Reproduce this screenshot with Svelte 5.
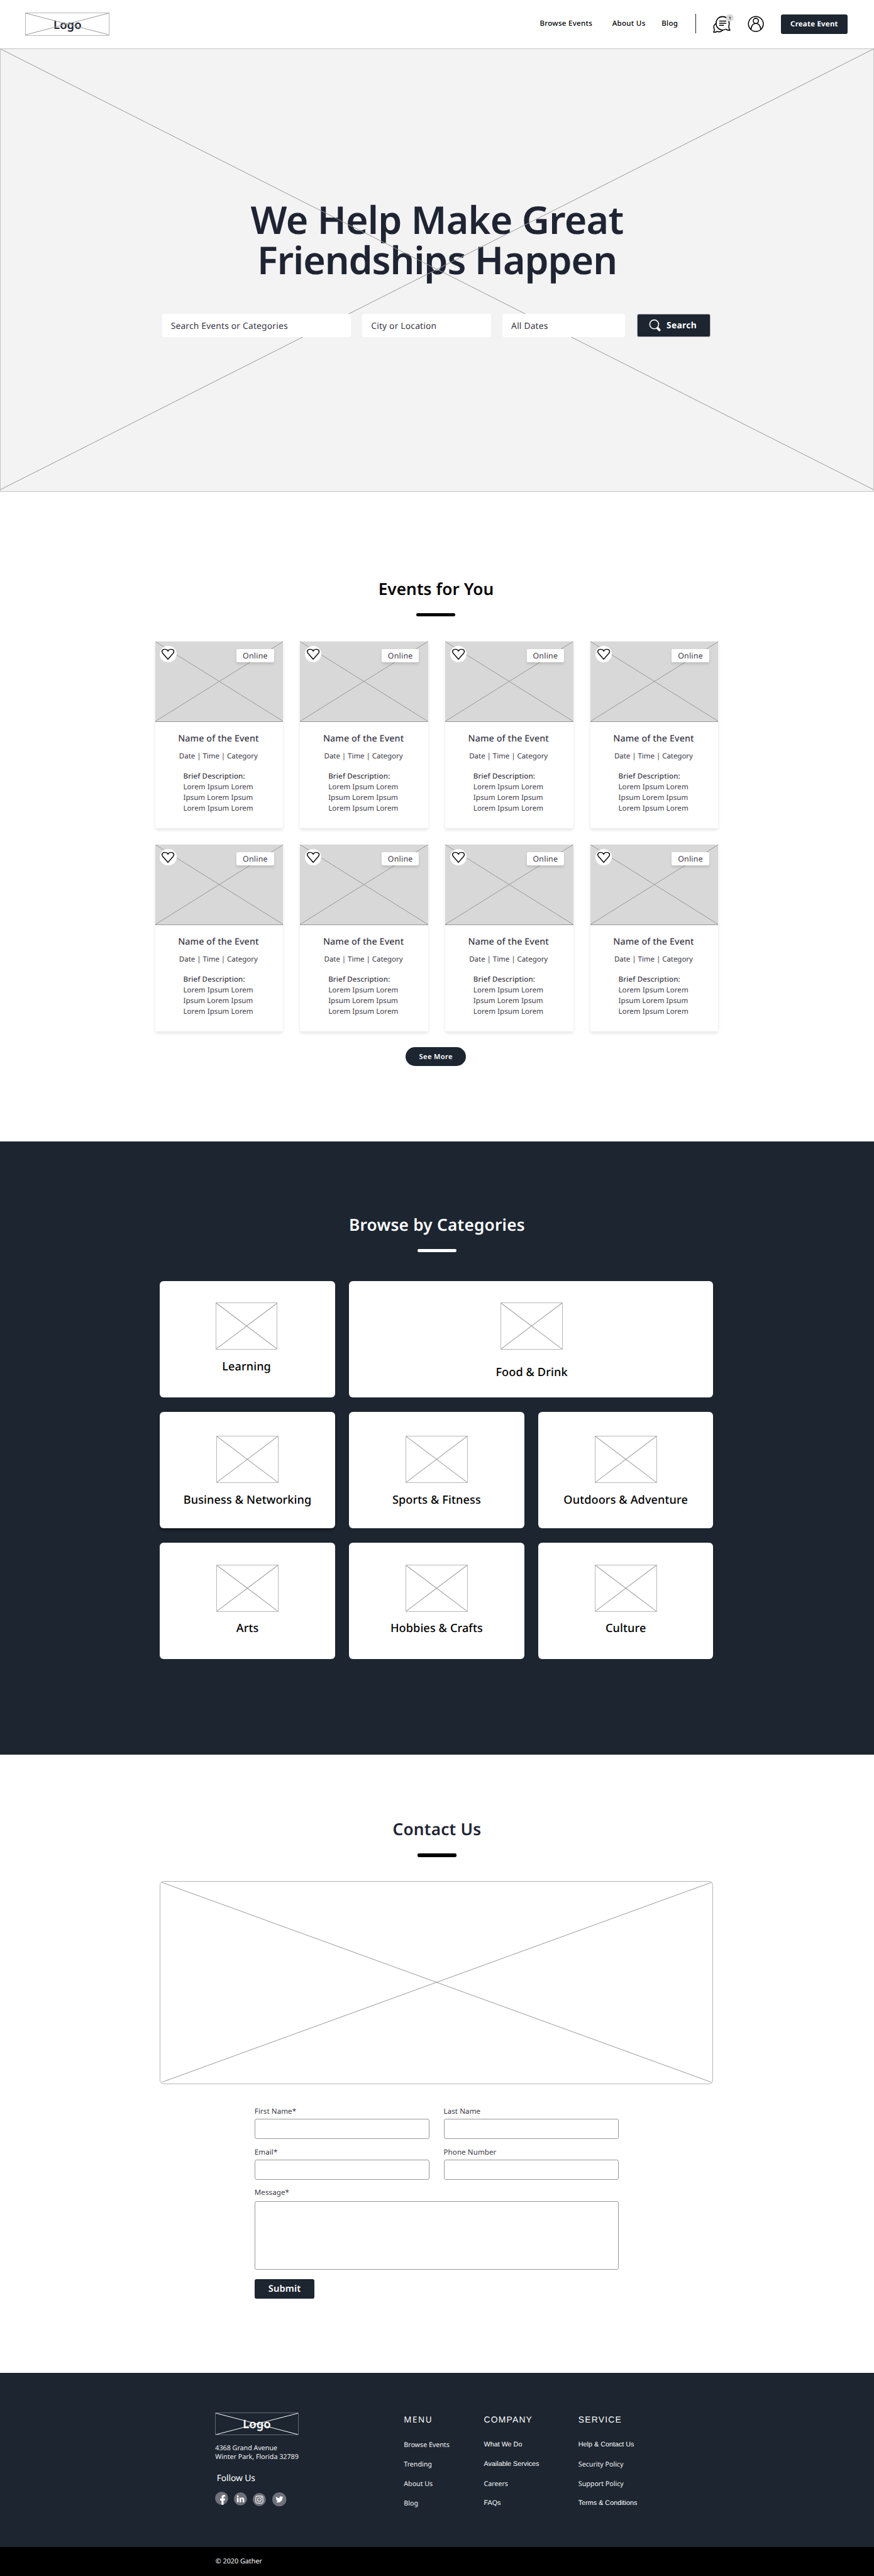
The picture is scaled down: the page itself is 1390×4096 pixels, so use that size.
<script>
  const events = Array.from({ length: 8 }, (_, id) => ({ id }));

  const categories = [
    { name: 'Learning', kind: 'learning' },
    { name: 'Food & Drink', kind: 'wide' },
    { name: 'Business & Networking', kind: 'mid raised' },
    { name: 'Sports & Fitness', kind: 'mid' },
    { name: 'Outdoors & Adventure', kind: 'mid' },
    { name: 'Arts', kind: 'last' },
    { name: 'Hobbies & Crafts', kind: 'last' },
    { name: 'Culture', kind: 'last' }
  ];

  const columns = [
    {
      title: 'MENU',
      kind: 'menu',
      links: [{ t: 'Browse Events' }, { t: 'Trending' }, { t: 'About Us' }, { t: 'Blog' }]
    },
    {
      title: 'COMPANY',
      kind: 'company',
      links: [
        { t: 'What We Do', alt: true },
        { t: 'Available Services', alt: true },
        { t: 'Careers' },
        { t: 'FAQs', alt: true }
      ]
    },
    {
      title: 'SERVICE',
      kind: 'service',
      links: [
        { t: 'Help & Contact Us', alt: true },
        { t: 'Security Policy' },
        { t: 'Support Policy' },
        { t: 'Terms & Conditions', alt: true }
      ]
    }
  ];
</script>

{#snippet cross()}
  <svg class="cross" viewBox="0 0 100 100" preserveAspectRatio="none" aria-hidden="true">
    <path d="M0 0L100 100M100 0L0 100" vector-effect="non-scaling-stroke" />
  </svg>
{/snippet}

<div class="page">
  <header class="topbar">
    <a class="logo" href="#top">{@render cross()}<span>Logo</span></a>
    <nav class="nav">
      <a class="n1" href="#events">Browse Events</a>
      <a class="n2" href="#about">About Us</a>
      <a class="n3" href="#blog">Blog</a>
    </nav>
    <div class="rule"></div>
    <svg class="chat" viewBox="118 24 134 120" aria-label="Messages">
      <g fill="none" stroke="#000" stroke-width="6" stroke-linecap="round" stroke-linejoin="round">
        <path d="M201 119C170 134 141 112 141 82C141 58 159 41 181 41C204 41 222 60 222 84C222 91 220 96 219 102C219 112 222 119 227 125C217 127 208 124 201 119Z" />
        <path d="M138 85C126 95 123 106 130 119C132 126 128 132 125 137C135 139 143 136 149 133C161 138 173 134 181 126" />
        <path d="M162 69H202M162 82H202M162 95H187" />
      </g>
      <circle cx="226" cy="49" r="23" fill="#d8d8d8" />
      <text x="226" y="58" text-anchor="middle" font-size="24" font-weight="600">1</text>
    </svg>
    <svg class="user" viewBox="336 36 102 102" aria-label="Account">
      <g fill="none" stroke="#000" stroke-width="6">
        <circle cx="387" cy="87" r="46" />
        <circle cx="387" cy="68" r="16" />
        <path d="M357 122C357 98 370 84 387 84C404 84 417 98 417 122" />
      </g>
    </svg>
    <button class="create">Create Event</button>
  </header>

  <section class="hero">
    <div class="hero-lines">{@render cross()}</div>
    <h1>
      <span class="first">We Help Make Great</span>
      <span class="second">Friendships Happen</span>
    </h1>
    <div class="search">
      <div class="field what">Search Events or Categories</div>
      <div class="field where">City or Location</div>
      <div class="field when">All Dates</div>
      <button class="go">
        <svg viewBox="0 0 25 25" aria-hidden="true">
          <circle cx="11" cy="10" r="9.2" fill="none" stroke="#fff" stroke-width="2" />
          <path d="M18.2 18L21.6 21.8" stroke="#fff" stroke-width="5" stroke-linecap="round" />
        </svg>
        <span>Search</span>
      </button>
    </div>
  </section>

  <section class="events">
    <h2>Events for You</h2>
    <div class="bar"></div>
    <div class="event-grid">
      {#each events as e (e.id)}
        <article class="event">
          <div class="pic">
            {@render cross()}
            <span class="heart">
              <svg viewBox="0 0 34 34" aria-hidden="true">
                <path d="M17 27.5L6.8 16C2.6 11 5.6 7 10.4 7C13.4 7 15.8 8.2 17 10.6C18.2 8.2 20.6 7 23.6 7C28.4 7 31.4 11 27.2 16Z" fill="none" stroke="#000" stroke-width="1.8" />
              </svg>
            </span>
            <span class="tag">Online</span>
          </div>
          <h3>Name of the Event</h3>
          <p class="meta">Date | Time | Category</p>
          <div class="desc">
            <b>Brief Description:</b><br />Lorem Ipsum Lorem<br />Ipsum Lorem Ipsum<br />Lorem Ipsum Lorem
          </div>
        </article>
      {/each}
    </div>
    <button class="more">See More</button>
  </section>

  <section class="categories">
    <h2>Browse by Categories</h2>
    <div class="bar"></div>
    <div class="cat-grid">
      {#each categories as c (c.name)}
        <a class="cat {c.kind}" href="#cat">
          <span class="thumb">{@render cross()}</span>
          <span class="name">{c.name}</span>
        </a>
      {/each}
    </div>
  </section>

  <section class="contact">
    <h2>Contact Us</h2>
    <div class="bar"></div>
    <div class="map">{@render cross()}</div>
    <form class="form">
      <label>First Name*<input type="text" /></label>
      <label>Last Name<input type="text" /></label>
      <label>Email*<input type="text" /></label>
      <label>Phone Number<input type="text" /></label>
      <label class="full">Message*<textarea></textarea></label>
      <button type="button" class="submit">Submit</button>
    </form>
  </section>

  <footer class="footer">
    <div class="brand">
      <a class="logo dark" href="#top">{@render cross()}<span>Logo</span></a>
      <address>4368 Grand Avenue<br />Winter Park, Florida 32789</address>
      <p class="follow">Follow Us</p>
      <div class="social">
        <svg class="fb" viewBox="0 0 27 27" aria-label="Facebook">
          <circle cx="13.5" cy="13.5" r="13.5" />
          <path transform="translate(3.2 4.4) scale(1.02)" d="M14 13.5h2.5l1-4H14v-2c0-1.03 0-2 2-2h1.5V2.14C17.17 2.1 15.94 2 14.64 2 11.93 2 10 3.66 10 6.7v2.8H7v4h3V22h4z" />
        </svg>
        <svg class="li" viewBox="0 0 27 27" aria-label="LinkedIn">
          <circle cx="13.5" cy="13.5" r="13.5" />
          <path d="M6 8.2a1.9 1.9 0 1 1 3.8 0a1.9 1.9 0 1 1-3.8 0zM6.3 11h3.3v9.3H6.3zM11.7 11h3.1v1.4c.6-1 1.6-1.7 3-1.7 2.5 0 3.5 1.6 3.5 4.3v5.3H18v-4.8c0-1.2-.3-2.1-1.5-2.1s-1.5.9-1.5 2.1v4.8h-3.3z" />
        </svg>
        <svg class="ig" viewBox="0 0 27 27" aria-label="Instagram">
          <circle cx="13.5" cy="13.5" r="13.5" />
          <g fill="none" stroke="#fff" stroke-width="1.4">
            <rect x="6.2" y="6.3" width="14.8" height="14.8" rx="4.2" />
            <ellipse cx="13.6" cy="13.7" rx="3.7" ry="3.7" />
          </g>
          <path d="M16.9 9.3a1 1 0 1 1 2 0a1 1 0 1 1-2 0z" />
        </svg>
        <svg class="tw" viewBox="0 0 29 29" aria-label="Twitter">
          <circle cx="14.5" cy="14.5" r="14.5" />
          <path transform="translate(6.9 6.7) scale(.66)" d="M23.953 4.57a10 10 0 01-2.825.775 4.958 4.958 0 002.163-2.723c-.951.555-2.005.959-3.127 1.184a4.92 4.92 0 00-8.384 4.482C7.69 8.095 4.067 6.13 1.64 3.162a4.822 4.822 0 00-.666 2.475c0 1.71.87 3.213 2.188 4.096a4.904 4.904 0 01-2.228-.616v.06a4.923 4.923 0 003.946 4.827 4.996 4.996 0 01-2.212.085 4.936 4.936 0 004.604 3.417 9.867 9.867 0 01-6.102 2.105c-.39 0-.779-.023-1.17-.067a13.995 13.995 0 007.557 2.209c9.053 0 13.998-7.496 13.998-13.985 0-.21 0-.42-.015-.63A9.935 9.935 0 0024 4.59z" />
        </svg>
      </div>
    </div>
    {#each columns as col (col.title)}
      <div class="col {col.kind}">
        <h4>{col.title}</h4>
        {#each col.links as l (l.t)}
          <a class:alt={l.alt} href="#link">{l.t}</a>
        {/each}
      </div>
    {/each}
  </footer>
  <div class="legal">© 2020 Gather</div>
</div>

<style>
  :global(html) {
    font-size: 7.7105px;
  }
  :global(body) {
    margin: 0;
    background: #fff;
  }
  .page {
    width: 100%;
    height: 4096px;
    display: flex;
    flex-direction: column;
    overflow: hidden;
    font-family: 'Noto Sans', 'Open Sans', sans-serif;
    font-size: 1.5rem;
    color: #3c3a47;
    text-rendering: geometricPrecision;
    white-space: nowrap;
  }
  .page * {
    box-sizing: border-box;
  }
  section,
  header,
  footer {
    flex: none;
  }
  a {
    color: inherit;
    text-decoration: none;
  }
  h1,
  h2,
  h3,
  h4,
  p {
    margin: 0;
  }
  button {
    font-family: inherit;
    border: 0;
    padding: 0;
    margin: 0;
    color: #fff;
    background: #1c2530;
    border-radius: 0.4rem;
    white-space: nowrap;
    text-rendering: geometricPrecision;
  }
  svg {
    display: block;
  }
  .cross {
    position: absolute;
    inset: 0;
    width: 100%;
    height: 100%;
    stroke: #999;
    stroke-width: 1px;
    fill: none;
  }

  .topbar {
    height: 10rem;
    display: flex;
    align-items: center;
    padding: 0 5.5rem 0 5.25rem;
  }
  .logo {
    position: relative;
    width: 17.35rem;
    height: 4.7rem;
    border: 1px solid #b8b8b8;
    display: flex;
    align-items: center;
    justify-content: center;
    font-size: 2.4rem;
    font-weight: 600;
    color: #1f2433;
  }
  .logo span {
    padding-top: 0.2rem;
  }
  .nav {
    margin-left: auto;
    display: flex;
    padding-bottom: 0.2rem;
    font-weight: 500;
    color: #000;
    letter-spacing: 0.025em;
  }
  .n1 {
    width: 14.95rem;
  }
  .n2 {
    width: 10.2rem;
  }
  .n3 {
    width: 6.95rem;
  }
  .rule {
    width: 1px;
    height: 4rem;
    background: #1c2530;
    margin-bottom: 0.2rem;
  }
  .chat {
    width: 4.47rem;
    height: 4rem;
    margin: 0 2.8rem 0.4rem 3.35rem;
  }
  .user {
    width: 3.4rem;
    height: 3.4rem;
    margin: 0 3.55rem 0.2rem 0;
  }
  .create {
    width: 13.66rem;
    height: 4rem;
    font-size: 1.5rem;
    font-weight: 700;
    letter-spacing: 0.016em;
  }

  .hero {
    position: relative;
    height: 91.4rem;
    background: #f3f3f3;
    border: 1px solid #c4c4c4;
    padding-top: 30.95rem;
  }
  .hero-lines {
    position: absolute;
    inset: 0 0 0.3rem;
    z-index: 1;
  }
  h1 {
    font-size: 7.9rem;
    line-height: 8.4rem;
    font-weight: 600;
    text-align: center;
    color: #1f2433;
  }
  h1 span {
    display: block;
  }
  .first {
    letter-spacing: -0.012em;
  }
  .second {
    letter-spacing: -0.018em;
  }
  .search {
    position: relative;
    z-index: 2;
    display: flex;
    margin: 6.83rem 0 0 33.3rem;
    height: 4.87rem;
  }
  .field {
    background: #fff;
    border-radius: 0.5rem;
    display: flex;
    align-items: center;
    padding: 0.1rem 0 0 1.8rem;
    font-size: 1.8rem;
    letter-spacing: 0.012em;
    margin-right: 2.4rem;
  }
  .what {
    width: 38.93rem;
  }
  .where {
    width: 26.5rem;
  }
  .when {
    width: 25.3rem;
  }
  .go {
    width: 15.2rem;
    border: 1px solid #b9b4ba;
    display: flex;
    align-items: center;
    padding-left: 2.4rem;
    font-size: 1.8rem;
    font-weight: 700;
    letter-spacing: 0.02em;
  }
  .go svg {
    width: 2.5rem;
    height: 2.5rem;
    margin-right: 1.1rem;
  }

  h2 {
    font-size: 3.4rem;
    line-height: 4rem;
    font-weight: 600;
    letter-spacing: 0.009em;
    text-align: center;
    color: #000;
  }
  .bar {
    width: 8rem;
    height: 0.6rem;
    border-radius: 0.3rem;
    background: #000;
    margin: 3.03rem auto 0;
  }
  .events {
    height: 134rem;
    padding-top: 18.07rem;
  }
  .events h2 {
    padding-right: 0.4rem;
    letter-spacing: 0.002em;
  }
  .events .bar {
    margin-left: 85.9rem;
  }
  .event-grid {
    display: grid;
    grid-template-columns: repeat(4, 26.4rem);
    grid-auto-rows: 38.5rem;
    gap: 3.4rem 3.52rem;
    margin: 5.2rem 0 0 32rem;
  }
  .event {
    background: #fff;
    border-radius: 0 0 0.4rem 0.4rem;
    box-shadow: 0 0.3rem 0.7rem rgba(0, 0, 0, 0.1);
  }
  .pic {
    position: relative;
    height: 16.6rem;
    background: #d8d8d8;
    border-bottom: 1px solid #999;
  }
  .heart {
    position: absolute;
    left: 1rem;
    top: 0.9rem;
    width: 3.4rem;
    height: 3.4rem;
    border-radius: 50%;
    background: #fff;
  }
  .tag {
    position: absolute;
    left: 16.8rem;
    top: 1.6rem;
    width: 7.7rem;
    height: 2.7rem;
    border-radius: 0.3rem;
    background: #fff;
    box-shadow: 0 0.3rem 0.6rem rgba(0, 0, 0, 0.12);
    font-size: 1.6rem;
    line-height: 2.8rem;
    letter-spacing: 0.02em;
    text-align: center;
  }
  h3 {
    margin-top: 2.33rem;
    padding-right: 0.3rem;
    font-size: 1.85rem;
    line-height: 2.4rem;
    font-weight: 500;
    letter-spacing: 0.008em;
    text-align: center;
  }
  .meta {
    margin-top: 1.4rem;
    padding-right: 0.3rem;
    line-height: 2rem;
    text-align: center;
    letter-spacing: -0.005em;
  }
  .desc {
    margin: 2.1rem 0 0 5.8rem;
    line-height: 2.2rem;
    letter-spacing: 0.005em;
  }
  .desc b {
    font-weight: 500;
    letter-spacing: 0.012em;
  }
  .more {
    display: block;
    width: 12.4rem;
    height: 4rem;
    margin: 3.2rem 0 0 83.7rem;
    border-radius: 2rem;
    font-size: 1.45rem;
    font-weight: 600;
    letter-spacing: 0.03em;
  }

  .categories {
    height: 126.4rem;
    padding-top: 15.13rem;
    background: #1c2530;
  }
  .categories h2 {
    color: #fff;
  }
  .categories .bar {
    background: #fff;
  }
  .cat-grid {
    display: grid;
    grid-template-columns: repeat(3, 36.1rem);
    grid-auto-rows: 24rem;
    gap: 3rem 2.91rem;
    margin: 6rem 0 0 33rem;
  }
  .cat {
    display: flex;
    flex-direction: column;
    align-items: center;
    padding-top: 4.5rem;
    background: #fff;
    border-radius: 0.8rem;
    color: #000;
  }
  .thumb {
    position: relative;
    width: 12.8rem;
    height: 9.7rem;
    border: 1px solid #b8b8b8;
    margin-bottom: 2rem;
  }
  .name {
    font-size: 2.35rem;
    line-height: 3rem;
    font-weight: 500;
    letter-spacing: 0.006em;
  }
  .learning {
    padding-right: 0.4rem;
  }
  .learning .thumb {
    margin-bottom: 2.08rem;
  }
  .wide {
    grid-column: span 2;
    padding-left: 0.2rem;
  }
  .wide .thumb {
    margin-bottom: 3.15rem;
  }
  .mid {
    padding-top: 4.95rem;
  }
  .mid .thumb {
    margin-bottom: 2.12rem;
  }
  .raised {
    box-shadow: 0 0.3rem 0.5rem rgba(0, 0, 0, 0.4);
  }

  .contact {
    height: 127.6rem;
    padding-top: 13.4rem;
  }
  .contact h2 {
    color: #1f2433;
  }
  .contact .bar {
    height: 0.7rem;
  }
  .map {
    position: relative;
    width: 114.1rem;
    height: 41.9rem;
    margin: 4.95rem 0 0 33rem;
    border: 1px solid #b4b4b4;
    border-radius: 0.8rem;
  }
  .map .cross {
    inset: 0.2rem 0.2rem;
    width: calc(100% - 0.4rem);
    height: calc(100% - 0.4rem);
  }
  .form {
    display: grid;
    grid-template-columns: 36.1rem 36.1rem;
    gap: 1.74rem 2.9rem;
    margin: 4.7rem 0 0 52.5rem;
    line-height: 2rem;
    letter-spacing: 0.008em;
  }
  .form label {
    display: flex;
    flex-direction: column;
  }
  .form .full {
    grid-column: span 2;
  }
  input,
  textarea {
    display: block;
    height: 4.2rem;
    margin: 0.46rem 0 0;
    padding: 0;
    border: 1px solid #979797;
    border-radius: 0.4rem;
    background: #fff;
    resize: none;
  }
  textarea {
    height: 14.1rem;
    margin-top: 0.66rem;
  }
  .submit {
    width: 12.4rem;
    height: 4rem;
    margin-top: 0.26rem;
    font-size: 1.9rem;
    font-weight: 600;
    letter-spacing: 0.012em;
  }

  .footer {
    height: 35.8rem;
    display: flex;
    padding: 8.1rem 0 0 44.3rem;
    background: #1c2530;
    color: #f0f0f2;
  }
  .brand {
    width: 39rem;
  }
  .dark {
    border: 1px solid #65696f;
    color: #fff;
  }
  .dark .cross {
    stroke: #fff;
  }
  address {
    margin: 1.75rem 0 0 0.1rem;
    font-size: 1.4rem;
    line-height: 1.9rem;
    font-style: normal;
    letter-spacing: -0.004em;
  }
  .follow {
    margin: 2.26rem 0 0 0.4rem;
    font-size: 1.8rem;
    line-height: 2.4rem;
    letter-spacing: -0.008em;
    color: #fff;
  }
  .social {
    display: flex;
    align-items: flex-start;
    margin: 1.5rem 0 0 0.1rem;
  }
  .social svg {
    width: 2.7rem;
    height: 2.7rem;
    margin-right: 1.2rem;
    fill: #fff;
  }
  .social circle {
    fill: #6f717a;
  }
  .social .li {
    margin-top: 0.1rem;
  }
  .social .ig {
    margin-top: 0.2rem;
    margin-right: 1.3rem;
  }
  .social .tw {
    width: 2.9rem;
    height: 2.9rem;
    margin-top: 0.1rem;
  }
  .col {
    display: flex;
    flex-direction: column;
    font-size: 1.4rem;
    line-height: 2rem;
  }
  .menu {
    width: 16.5rem;
  }
  .company {
    width: 19.5rem;
  }
  h4 {
    margin: 0.22rem 0 3.1rem;
    font-size: 1.75rem;
    line-height: 2.4rem;
    font-weight: 400;
    letter-spacing: 0.11em;
    color: #fff;
  }
  .company h4,
  .service h4 {
    font-family: 'Liberation Sans', sans-serif;
    font-size: 1.8rem;
    letter-spacing: 0.088em;
  }
  .col a {
    margin-bottom: 2rem;
    letter-spacing: -0.006em;
  }
  .col .alt {
    font-family: 'Liberation Sans', sans-serif;
    letter-spacing: 0;
    color: #fff;
  }
  .legal {
    flex: 1;
    display: flex;
    align-items: center;
    padding: 0 0 0.1rem 44.45rem;
    background: #000;
    color: #fff;
    font-size: 1.4rem;
  }
</style>
